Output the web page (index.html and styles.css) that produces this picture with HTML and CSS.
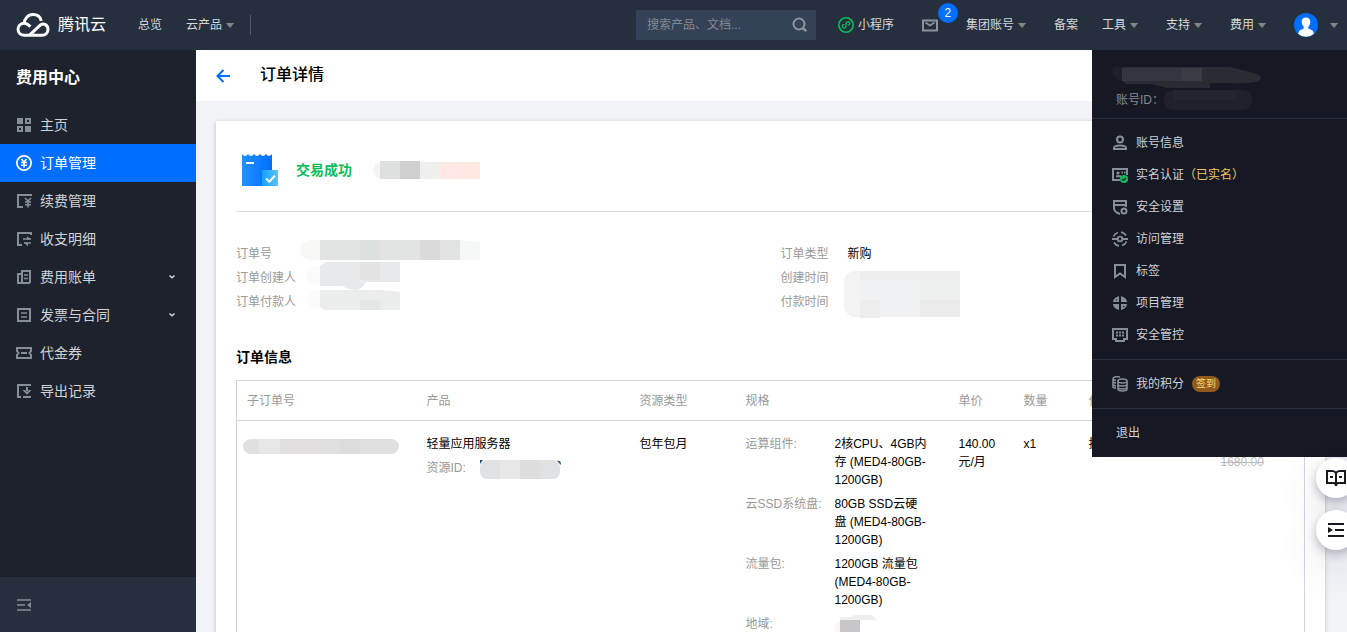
FILE: index.html
```html
<!DOCTYPE html>
<html lang="zh-CN">
<head>
<meta charset="utf-8">
<title>订单详情 - 费用中心</title>
<link rel="stylesheet" href="styles.css">
</head>
<body>
<header class="topbar">
  <a class="brand" href="#">
    <svg width="34" height="26" viewBox="0 0 34 26" fill="none" stroke="#fff" stroke-width="3" stroke-linecap="butt"><path d="M13.500 23.200 24.500 12.900C27.500 10.500 32 13 32 17.300 32 20.800 29.500 23.200 26 23.200H8.500C4.700 23.200 2 20.800 2 17.300 2 13.800 4.700 11.300 8.200 11.300 10.500 11.300 12 12.300 14.500 14.700"/><path d="M8.300 11.500C8.300 6.500 12 2.600 17 2.600 21.200 2.600 24.300 5 25.300 8.800"/></svg>
    <span>腾讯云</span>
  </a>
  <nav class="nav-left">
    <a href="#">总览</a>
    <a href="#" class="caret">云产品</a>
  </nav>
  <form class="search">
    <input type="text" aria-label="搜索" placeholder="搜索产品、文档...">
    <button type="button" aria-label="搜索"><svg width="16" height="16" viewBox="0 0 16 16" fill="none" stroke="#8d959d" stroke-width="2"><circle cx="7" cy="7" r="5.500"/><path d="m10.800 11 3.500 3.200" stroke-width="2.500"/></svg></button>
  </form>
  <nav class="nav-right">
    <a href="#" class="mini"><svg width="16" height="16" viewBox="0 0 16 16" fill="none" stroke="#0abf5b"><circle cx="8" cy="8" r="7.200" stroke-width="1.600"/><path d="M6.300 7.600C4.600 7.400 3.900 9 4.600 10.200c1 1.500 3.400.8 3.400-1.200V6.500c0-1.700 2.300-2.500 3.400-1.200.8 1.300 0 2.900-1.600 2.900" stroke-width="1.300"/></svg>小程序</a>
    <a href="#" class="mail" aria-label="消息"><svg width="16" height="13" viewBox="0 0 16 13" fill="none" stroke="#8a949c" stroke-width="2"><path d="M1 1.500h14v10H1z"/><path d="m3.500 3.500 4.500 3 4.500-3" stroke-width="1.600"/></svg><span class="badge">2</span></a>
    <a href="#" class="caret">集团账号</a>
    <a href="#">备案</a>
    <a href="#" class="caret near">工具</a>
    <a href="#" class="caret">支持</a>
    <a href="#" class="caret">费用</a>
    <a href="#" class="user caret" aria-label="账号"><svg width="24" height="24" viewBox="0 0 24 24"><circle cx="12" cy="12" r="12" fill="#006eff"/><path d="M12 4.500c-2.700 0-4.500 1.700-4.300 4.500.1 2 .9 3.600 2 4.800v1.700L5.500 17.600 4 20.800A12 12 0 0 0 20 20.800L18.500 17.600l-4.200-2.100v-1.700c1.100-1.200 1.900-2.800 2-4.800.2-2.800-1.600-4.500-4.300-4.500z" fill="#fff"/></svg></a>
  </nav>
</header>

<div class="shell">
  <aside class="sidebar">
    <h2>费用中心</h2>
    <nav class="menu">
      <a href="#"><svg class="ico" viewBox="0 0 16 16"><path d="M1 1h6v6H1zM9 9h6v6H9z" fill="currentColor"/><path d="M10 2h4v4h-4zM2 10h4v4H2z" fill="none" stroke="currentColor" stroke-width="2"/></svg>主页</a>
      <a href="#" class="active"><svg class="ico" viewBox="0 0 16 16" fill="none" stroke="currentColor" stroke-width="1.800"><circle cx="8" cy="8" r="7.100"/><path d="m5.500 4 2.500 3 2.500-3M8 7v5.500M5 7.500h6M5 10.200h6" stroke-width="1.600"/></svg>订单管理</a>
      <a href="#"><svg class="ico" viewBox="0 0 16 16" fill="none" stroke="currentColor"><path d="M15 3V2H2v12h5" stroke-width="2"/><path d="m9 5 3 3 3-3M12 8v6.500M9 9h6M9 11.700h6" stroke-width="1.600"/></svg>续费管理</a>
      <a href="#"><svg class="ico" viewBox="0 0 16 16" fill="none" stroke="currentColor"><path d="M15 4V2H2v12h4" stroke-width="2"/><path d="M7 8h8M8 12h7" stroke-width="1.600"/><path d="m11 5 4 3.500h-4zM12 15.500 8 11.500h4z" fill="currentColor" stroke="none"/></svg>收支明细</a>
      <a href="#"><svg class="ico" viewBox="0 0 16 16" fill="none" stroke="currentColor" stroke-width="2"><path d="M6 2h8v11l-1 1H6zM6 5H2v9h4"/><path d="M8 6h4M8 9.500h4" stroke-width="1.600"/></svg>费用账单<svg class="chev" viewBox="0 0 8 6" fill="none" stroke="#d5d8db" stroke-width="1.500"><path d="m1.500 1.500 2.500 2.200 2.500-2.200"/></svg></a>
      <a href="#"><svg class="ico" viewBox="0 0 16 16" fill="none" stroke="currentColor" stroke-width="2"><path d="M2 2h12v12H2z"/><path d="M5 6h6M5 10h6" stroke-width="1.600"/></svg>发票与合同<svg class="chev" viewBox="0 0 8 6" fill="none" stroke="#d5d8db" stroke-width="1.500"><path d="m1.500 1.500 2.500 2.200 2.500-2.200"/></svg></a>
      <a href="#"><svg class="ico" viewBox="0 0 16 16" fill="none" stroke="currentColor" stroke-width="2"><path d="M1 3h14v3l-1.500 2 1.500 2v3H1v-3l1.500-2L1 6zM5 8h6"/></svg>代金券</a>
      <a href="#"><svg class="ico" viewBox="0 0 16 16" fill="none" stroke="currentColor" stroke-width="2"><path d="M15 2H2v12h3M7 14h8M11 4v4"/><path d="M6.500 7H9l2 2 2-2h2.500L11 11.800z" fill="currentColor" stroke="none"/></svg>导出记录</a>
    </nav>
    <button class="collapse" aria-label="收起菜单"><svg class="ico" viewBox="0 0 16 16" fill="none" stroke="currentColor" stroke-width="1.500"><path d="M1 3h14M1 8h8M1 13h14"/><path d="M15 5v6l-4-3z" fill="currentColor" stroke="none"/></svg></button>
  </aside>

  <main class="main">
    <div class="page-head">
      <a href="#" aria-label="返回"><svg width="16" height="16" viewBox="0 0 16 16" fill="none" stroke="#006eff" stroke-width="2"><path d="M15 8H3M8.500 2 2.500 8l6 6"/></svg></a>
      <h1>订单详情</h1>
    </div>
    <section class="card">
      <div class="status">
        <svg width="36" height="34" viewBox="0 0 36 34"><defs><linearGradient id="paper"><stop stop-color="#2391ff"/><stop offset="1" stop-color="#006eff"/></linearGradient><linearGradient id="tick"><stop stop-color="#13a2ff"/><stop offset="1" stop-color="#5cc2ff"/></linearGradient></defs><path d="M0 1q3 4 6 0 3 4 6 0 3 4 6 0 3 4 6 0 3 4 6 0v32H0z" fill="url(#paper)"/><path d="M4 9h8v2H4z" fill="#fff"/><path d="M20 17h16v16H20z" fill="url(#tick)"/><path d="m24 25.500 3.300 3.200 5.500-6" fill="none" stroke="#fff" stroke-width="2"/></svg>
        <strong>交易成功</strong>
        <svg class="mask" width="107" height="18" viewBox="0 0 107 18"><path d="M7 1Q0 3 0 9t7 9z" fill="#f4f4f3"/><path d="M7 0h20v18H7z" fill="#dedfdf"/><path d="M27 0h20v18H27z" fill="#cfcfcf"/><path d="M47 1h20v17H47z" fill="#efefee"/><path d="M67 1h20v17H67z" fill="#ffe8e5"/><path d="M87 1h20v17H87z" fill="#ffe8e1"/></svg>
      </div>
      <div class="info">
        <div class="pane">
          <dl>
            <dt>订单号</dt><dd></dd>
            <dt>订单创建人</dt><dd></dd>
            <dt>订单付款人</dt><dd></dd>
          </dl>
          <svg class="mask-left" width="180" height="72" viewBox="0 0 180 72"><path d="M20 0H10Q0 2 0 11q1 7 10 9h10z" fill="#f8f8f6"/><path d="M20 0h140v20H20z" fill="#e2e3e3"/><path d="M60 0h20v20H60z" fill="#dce0df"/><path d="M120 0h20v20h-20z" fill="#dadada"/><path d="M160 0l20 2v18h-20z" fill="#f6f8f7"/><path d="M20 26q-14 1-14 10t14 9zM20 50q-12 1-12 10t12 9z" fill="#fcfbfa"/><path d="M26 22h74v20H66q-3 6-9 8-9 0-14-4H20V26z" fill="#e8e9ea"/><path d="M60 22h20v18H60z" fill="#e3e3e3"/><path d="M20 50h60l20 2v18H24l-4-3z" fill="#ebecec"/><path d="M60 60h20v10H60z" fill="#e4e7e6"/></svg>
        </div>
        <div class="pane">
          <dl class="short">
            <dt>订单类型</dt><dd>新购</dd>
            <dt>创建时间</dt><dd></dd>
            <dt>付款时间</dt><dd></dd>
          </dl>
          <svg class="mask-right" width="117" height="48" viewBox="0 0 117 48"><path d="M17 0h100v46H17z" fill="#f0f1f3"/><path d="M17 0H11Q1 2 1 11v17q-3 12 8 18h8z" fill="#f3f3f2"/><path d="M17 0h100v9H17z" fill="#ededed"/><path d="M77 9h40v20H77z" fill="#eeefef"/><path d="M77 29h40v17H77z" fill="#ebebec"/><path d="M17 29h20v18H17z" fill="#ededee"/></svg>
        </div>
      </div>
      <h3>订单信息</h3>
      <table class="orders">
        <colgroup><col class="c-id"><col class="c-wide"><col class="c-type"><col class="c-wide"><col class="c-num"><col class="c-num"><col class="c-num"><col class="c-term"><col></colgroup>
        <thead><tr><th>子订单号</th><th>产品</th><th>资源类型</th><th>规格</th><th>单价</th><th>数量</th><th>付费方式</th><th>时长</th><th>金额</th></tr></thead>
        <tbody><tr>
          <td><svg class="mask-id" width="156" height="18" viewBox="0 0 156 18"><rect width="156" height="15" y="2" rx="8" fill="#e0e0e0"/><path d="M16 2h21v15H16z" fill="#e6e6e6"/><path d="M37 2h40v15H37z" fill="#e1dfdf"/><path d="M97 2h20v15H97z" fill="#dcdcdc"/></svg></td>
          <td><p>轻量应用服务器</p><p class="muted rid">资源ID: <svg width="82" height="20" viewBox="0 0 82 20"><path d="M0 1h3l-3 4zM77 2q4-1 4 4z" fill="#24507b"/><rect width="80" height="19" y="1" rx="7" fill="#e0e1e3"/><path d="M20 1h20v19H20z" fill="#e7e7e7"/><path d="M40 1h20v19H40z" fill="#dddddd"/></svg></p></td>
          <td>包年包月</td>
          <td><dl class="spec">
            <dt>运算组件:</dt><dd>2核CPU、4GB内存 (MED4-80GB-1200GB)</dd>
            <dt>云SSD系统盘:</dt><dd>80GB SSD云硬盘 (MED4-80GB-1200GB)</dd>
            <dt>流量包:</dt><dd>1200GB 流量包 (MED4-80GB-1200GB)</dd>
            <dt>地域:</dt><dd><svg width="42" height="20" viewBox="0 0 42 20"><path d="M5 20V6Q-3 10 0 20z" fill="#f8f7f6"/><path d="M5 2h11q4-3 13-3 9 0 13 6H5z" fill="#eeeeee"/><path d="M5 5h20v15H5z" fill="#c7c6cb"/></svg></dd>
          </dl></td>
          <td>140.00元/月</td><td>x1</td><td>按月</td><td>1年</td><td><p>840.00</p><p class="old"><s>1680.00</s></p></td>
        </tr></tbody>
      </table>
    </section>
  </main>
</div>

<div class="account">
  <div class="who">
    <svg class="mask-name" width="150" height="22" viewBox="0 0 150 22"><path d="M10 2Q0-2 0 5q1 8 10 10z" fill="#1d202a"/><path d="M10 1h108l20 5q14 3 10 8-6 4-28 3H98v5H55l-15-4H14l-4-3z" fill="#2a2c34"/><path d="M10 2h80v13H10z" fill="#34363f"/><path d="M70 2h20v13H70z" fill="#3a3c43"/></svg>
    <p>账号ID：<svg width="88" height="20" viewBox="0 0 88 20"><rect width="88" height="20" rx="9" fill="#1f222b"/><path d="M10 0h62v10H10z" fill="#23262f"/></svg></p>
  </div>
  <nav class="group">
    <a href="#"><svg class="ico" viewBox="0 0 16 16" fill="none" stroke="currentColor" stroke-width="2"><circle cx="8" cy="4.500" r="3"/><path d="M2 14v-1q0-2.500 6-2.500T14 13v1z"/></svg>账号信息</a>
    <a href="#"><svg class="ico" viewBox="0 0 16 16" fill="none" stroke="currentColor"><path d="M15 8V2H1v11h7" stroke-width="2"/><path d="M4 9.300h5M9.500 5.500h1.500M12 5.500h1.500" stroke-width="2"/><circle cx="6" cy="6" r="1.600" fill="currentColor" stroke="none"/><circle cx="12" cy="12" r="4" fill="#0abf5b" stroke="none"/><path d="m10.200 12 1.400 1.300 2.300-2.500" stroke="#161823" stroke-width="1.200"/></svg>实名认证<em>（已实名）</em></a>
    <a href="#"><svg class="ico" viewBox="0 0 16 16" fill="none" stroke="currentColor" stroke-width="2"><path d="M14 8V2H2v7q0 4 6 6M2 6h12"/><circle cx="12" cy="12" r="2.500"/></svg>安全设置</a>
    <a href="#"><svg class="ico" viewBox="0 0 16 16" fill="none" stroke="currentColor" stroke-width="1.800"><circle cx="8" cy="8" r="2.300"/><path d="M0 8h5.500M10.500 8H16M1.500 5.500A7 7 0 0 1 6 1.500M9 1.200a7 7 0 0 1 5 3.300M14.500 10.500A7 7 0 0 1 10 14.500M7 14.800a7 7 0 0 1-5-3.300"/></svg>访问管理</a>
    <a href="#"><svg class="ico" viewBox="0 0 16 16" fill="none" stroke="currentColor" stroke-width="2"><path d="M3 2h10v12l-5-3.500L3 14z"/></svg>标签</a>
    <a href="#"><svg class="ico" viewBox="0 0 16 16" fill="currentColor"><path d="M7 1v6H1q0-4 6-6zM9 1q6 2 6 6H9zM1 9h6v6q-6-2-6-6zM9 9h6q0 4-6 6z"/><path d="M3.500 5.500 5 4v1.500zM11 11h2l-2 1.500z" fill="#161823"/></svg>项目管理</a>
    <a href="#"><svg class="ico" viewBox="0 0 16 16" fill="none" stroke="currentColor" stroke-width="2"><path d="M1 2h14v10h-3v2H4v-2H1z"/><path d="M4 5.500h8M4 8.500h8" stroke-dasharray="2 1"/></svg>安全管控</a>
  </nav>
  <nav class="row"><a href="#"><svg class="ico" viewBox="0 0 16 16" fill="none" stroke="currentColor" stroke-width="1.600"><ellipse cx="10.500" cy="5" rx="4.500" ry="2"/><path d="M6 5v8q0 2 4.500 2t4.500-2V5M6 8q0 2 4.500 2T15 8M6 11q0 2 4.500 2t4.500-2M8 1Q1 0 1 3v8q0 1 3 1M1 5.500q1 1.500 3 1.500M1 8.500Q2 10 4 10M1 3q1 1.300 3 1.300"/></svg>我的积分<span class="sign">签到</span></a></nav>
  <nav class="row exit"><a href="#">退出</a></nav>
</div>

<div class="floaters">
  <button aria-label="文档"><svg width="20" height="18" viewBox="0 0 20 18" fill="none" stroke="#16181d" stroke-width="2"><path d="M10 4Q9 2 6 2H1v12h7l2 1.500 2-1.500h7V2h-5q-3 0-4 2zM10 4v13M4 8h3M13 8h3"/></svg></button>
  <button aria-label="目录"><svg width="18" height="16" viewBox="0 0 18 16" fill="none" stroke="#16181d" stroke-width="2"><path d="M1 2h16M8 8h9M1 14h16"/><path d="M1 5v6l5-3z" fill="#16181d" stroke="none"/></svg></button>
</div>
</body>
</html>
```
FILE: styles.css
```css
* { box-sizing: border-box; }
body {
  margin: 0;
  height: 100vh;
  overflow: hidden;
  display: flex;
  flex-direction: column;
  font: 12px/18px "Liberation Sans", "Noto Sans CJK SC", sans-serif;
  color: #000;
  background: #f2f3f7;
}
a { color: inherit; text-decoration: none; }
h1, h2, h3, p, dl, dd { margin: 0; }
button { border: 0; padding: 0; background: none; cursor: pointer; }
svg { display: block; flex: none; }
.ico { width: 16px; height: 16px; color: #868f97; }

.topbar {
  flex: none;
  height: 50px;
  display: flex;
  align-items: center;
  padding: 0 9px 0 16px;
  background: #262f3e;
  color: #d5d8db;
}
.brand { display: flex; align-items: center; gap: 8px; font-size: 16px; color: #fff; }
.nav-left {
  display: flex;
  align-items: center;
  gap: 24px;
  height: 20px;
  margin-left: 32px;
  padding-right: 16px;
  border-right: 1px solid #535b67;
}
.nav-right { display: flex; align-items: center; }
.nav-right a { margin-left: 28px; }
.nav-right .near { margin-left: 24px; }
.caret { display: flex; align-items: center; gap: 4px; }
.caret::after {
  content: "";
  border: 4px solid transparent;
  border-top: 5px solid #868685;
  border-bottom: 0;
}
.search {
  display: flex;
  align-items: center;
  width: 180px;
  height: 30px;
  margin-left: auto;
  padding: 0 8px 0 11px;
  background: #344258;
}
.search input {
  flex: 1;
  min-width: 0;
  padding: 0;
  border: 0;
  outline: 0;
  background: none;
  color: #fff;
  font: inherit;
}
.search input::placeholder { color: #85898f; opacity: 1; }
.nav-right .mini { display: flex; align-items: center; gap: 4px; margin-left: 22px; }
.mail { position: relative; }
.badge {
  position: absolute;
  left: 16px;
  top: -16px;
  width: 20px;
  height: 20px;
  border-radius: 50%;
  background: #006eff;
  color: #fff;
  line-height: 20px;
  text-align: center;
}
.nav-right .user { gap: 12px; }

.shell { flex: 1; min-height: 0; display: flex; }
.sidebar {
  flex: none;
  width: 196px;
  display: flex;
  flex-direction: column;
  background: #1e222d;
  color: #d0d2d5;
}
.sidebar h2 { padding: 17px 16px; font-size: 16px; line-height: 22px; color: #fff; }
.menu { flex: 1; font-size: 14px; }
.menu a { display: flex; align-items: center; gap: 8px; height: 38px; padding: 0 20px 0 16px; }
.menu .active, .menu .active .ico { background: #006eff; color: #fff; }
.chev { width: 8px; height: 6px; margin-left: auto; }
.collapse { height: 55px; padding: 0 16px; background: #262f3e; }

.main { flex: 1; min-width: 0; overflow: hidden; }
.page-head {
  display: flex;
  align-items: center;
  gap: 29px;
  height: 51px;
  padding: 0 20px 0 19px;
  background: #fff;
}
.page-head h1 { padding-bottom: 2px; font-size: 16px; line-height: 22px; font-weight: 500; }
.card {
  margin: 20px 22px 0 20px;
  padding: 0 20px 20px;
  min-height: 560px;
  background: #fff;
  box-shadow: 0 1px 4px rgba(54, 58, 80, .3);
}
.status {
  display: flex;
  align-items: center;
  height: 91px;
  padding: 8px 6px 0;
  border-bottom: 1px solid #dcdddf;
}
.status strong { margin-left: 18px; font-size: 14px; color: #0abf5b; }
.mask { margin-left: 21px; }
.info {
  display: grid;
  grid-template-columns: 1fr 1fr;
  gap: 20px;
  margin-top: 30px;
  line-height: 24px;
}
.pane { position: relative; }
.info dl {
  display: grid;
  grid-template-columns: 80px 1fr;
  grid-auto-rows: 24px;
}
.info .short { grid-template-columns: 67px 1fr; }
.info dt, .muted, .spec dt { color: #999; }
.mask-left { position: absolute; left: 64px; top: -2px; }
.mask-right { position: absolute; left: 62px; top: 29px; }
.card h3 { margin: 33px 0 13px; font-size: 14px; line-height: 20px; }

.orders {
  width: 100%;
  height: 300px;
  table-layout: fixed;
  border-collapse: collapse;
  border: 1px solid #cfd5de;
}
.orders th {
  height: 40px;
  padding: 0 10px;
  border-bottom: 1px solid #cfd5de;
  color: #999;
  font-weight: 400;
  text-align: left;
  white-space: nowrap;
}
.orders td { padding: 14px 10px; vertical-align: top; }
.c-id { width: 180px; }
.c-wide { width: 213px; }
.c-type { width: 106px; }
.c-num { width: 65px; }
.c-term { width: 67px; }
.orders td p + .rid { margin-top: 6px; }
.orders td:first-child { padding: 16px 6px; }
.rid { display: flex; gap: 14px; }
.old { color: #bbb; }
.spec { display: grid; grid-template-columns: 79px 94px; gap: 6px 10px; }
.spec dt { white-space: nowrap; }

.account {
  position: absolute;
  top: 50px;
  right: 0;
  width: 255px;
  background: #161823;
  color: #d0d2d5;
}
.who { height: 69px; padding: 16px 20px 0; border-bottom: 1px solid #262f3e; }
.who p { display: flex; align-items: center; height: 20px; margin: 2px 0 0 4px; color: #888; }
.account a { display: flex; align-items: center; gap: 8px; height: 32px; }
.account em { margin-left: -8px; font-style: normal; color: #f0c75e; }
.group { padding: 8px 20px; border-bottom: 1px solid #262f3e; }
.row { padding: 8px 20px; }
.row + .row { border-top: 1px solid #262f3e; padding-left: 24px; }
.sign {
  padding: 0 4px;
  border-radius: 8px;
  background: #91591b;
  color: #ffd76b;
  font-size: 10px;
  line-height: 16px;
}
.floaters {
  position: absolute;
  top: 458px;
  right: 0;
  width: 31px;
  display: grid;
  gap: 12px;
}
.floaters button {
  display: grid;
  place-items: center;
  width: 40px;
  height: 40px;
  border-radius: 50%;
  background: #fff;
  box-shadow: 0 4px 10px rgba(54, 58, 80, .32), 0 16px 40px rgba(54, 58, 80, .14);
}
```
